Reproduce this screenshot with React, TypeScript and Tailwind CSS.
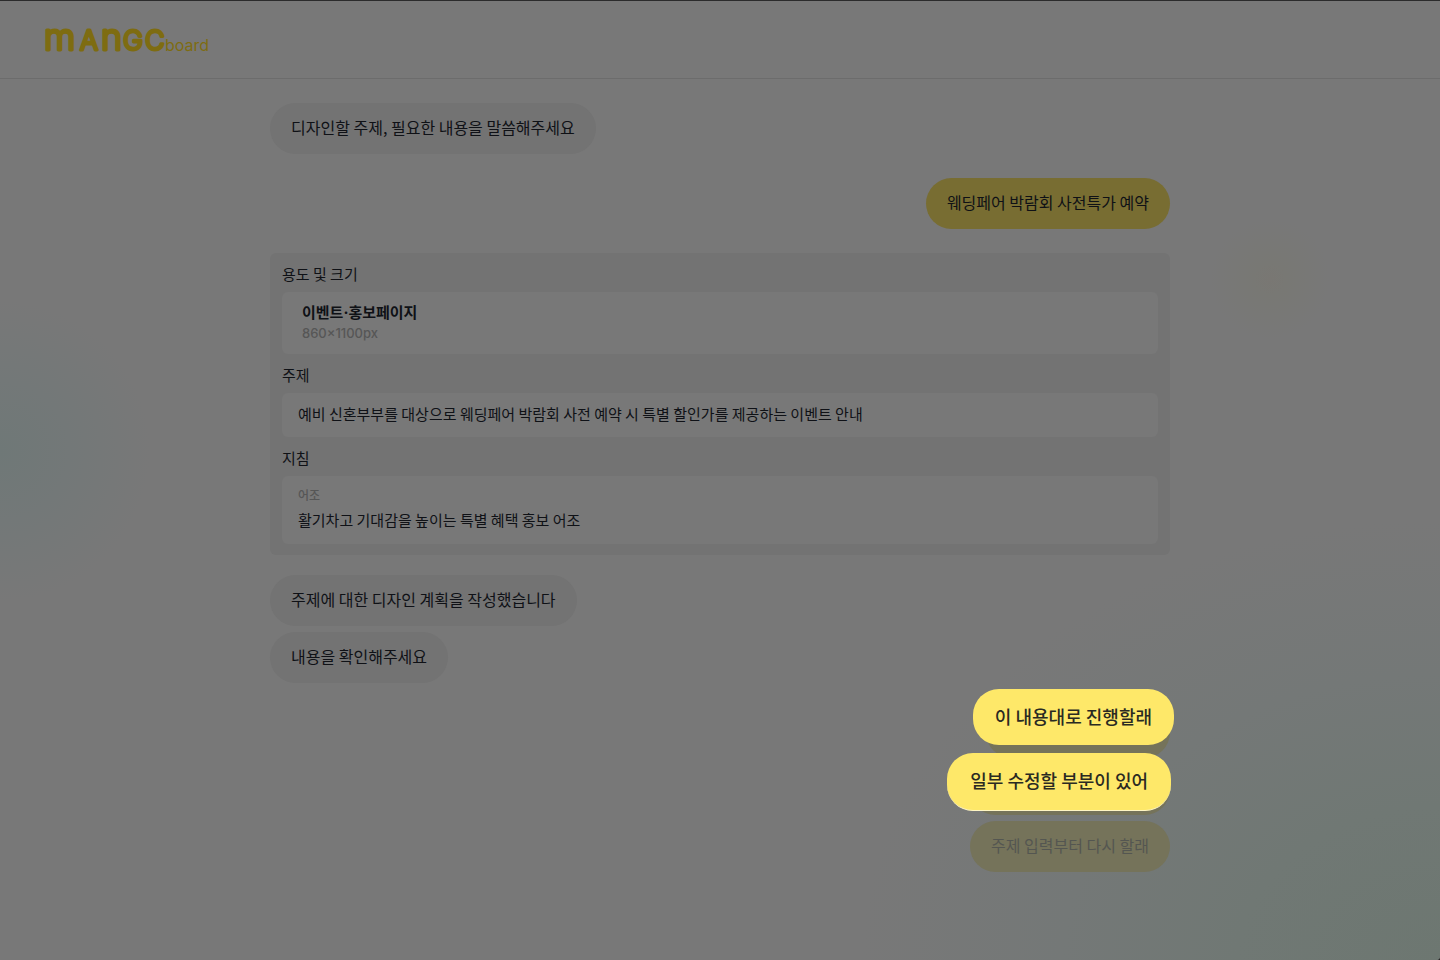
import type { ReactNode } from "react";

function Logo() {
  return (
    <a href="/" aria-label="mango board" className="block">
      <svg width="174" height="60" viewBox="0 0 174 60" fill="#7e6c11">
        <g
          fontFamily="Inter, sans-serif"
          fontWeight="300"
          stroke="#7e6c11"
          strokeWidth="3"
          strokeLinejoin="round"
          strokeLinecap="round"
        >
          <text x="3" y="40" fontSize="36">m</text>
          <text x="39" y="40" fontSize="27">A</text>
          <text x="60" y="40" fontSize="36">n</text>
          <text x="82" y="40" fontSize="27">G</text>
          <text x="104" y="40" fontSize="27">C</text>
        </g>
        <text x="124" y="41" fontFamily="Inter, sans-serif" fontSize="16" fontWeight="400">
          board
        </text>
      </svg>
    </a>
  );
}

function Bubble({ children, mine }: { children: ReactNode; mine?: boolean }) {
  return (
    <p
      className={`px-[21px] pt-3 pb-[14px] text-base leading-[25px] rounded-[26px] ${
        mine ? "self-end bg-[#786d32]" : "self-start bg-[#737373]"
      }`}
    >
      {children}
    </p>
  );
}

function Section({ title, children }: { title: string; children: ReactNode }) {
  return (
    <section>
      <h2 className="pt-[10px] pb-2 leading-[21px]">{title}</h2>
      <div className="rounded-md bg-[#787878]">{children}</div>
    </section>
  );
}

export default function App() {
  return (
    <div className="min-h-screen bg-[#262627] flex font-['Noto_Sans_CJK_KR',sans-serif] text-[#0f1116]">
      <div className="flex-1 flex flex-col border-t border-[#2b2b2c] rounded-br-sm bg-[#787878] bg-[radial-gradient(circle_at_0px_450px,#6f7877_0px,#737878_70px,#78787800_150px),radial-gradient(circle_at_1270px_278px,#797773_0px,#787874_16px,#78787800_60px),radial-gradient(ellipse_580px_440px_at_100%_100%,#6d7771_0%,#707874_35%,#747877_65%,#78787800_100%)]">

        {/* Header */}
        <header className="h-[78px] flex items-center px-[41px] border-b border-[#6c6c6c]">
          <Logo />
        </header>

        {/* Conversation */}
        <main className="w-full max-w-[900px] mx-auto pt-6 pb-20 flex flex-col">
          <Bubble>디자인할 주제, 필요한 내용을 말씀해주세요</Bubble>

          <div className="py-6 flex flex-col">
            <Bubble mine>웨딩페어 박람회 사전특가 예약</Bubble>
          </div>

          {/* Design plan */}
          <div className="px-3 pb-[11px] rounded-md bg-[#737373] text-[15px]">
            <Section title="용도 및 크기">
              <div className="px-5 py-[11px] leading-5 font-[Inter,'Noto_Sans_CJK_KR',sans-serif]">
                <p className="font-bold">이벤트·홍보페이지</p>
                <p className="text-[13px] leading-5 font-medium text-[#565656]">860×1100px</p>
              </div>
            </Section>
            <Section title="주제">
              <p className="px-4 pt-[10px] pb-3 leading-[22px]">
                예비 신혼부부를 대상으로 웨딩페어 박람회 사전 예약 시 특별 할인가를 제공하는 이벤트 안내
              </p>
            </Section>
            <Section title="지침">
              <div className="px-4 pt-[9px] pb-[13px]">
                <h3 className="mb-1 text-xs leading-5 font-medium text-[#565656]">어조</h3>
                <p className="leading-[22px]">활기차고 기대감을 높이는 특별 혜택 홍보 어조</p>
              </div>
            </Section>
          </div>

          <div className="pt-5 pb-6 flex flex-col gap-[6px]">
            <Bubble>주제에 대한 디자인 계획을 작성했습니다</Bubble>
            <Bubble>내용을 확인해주세요</Bubble>
          </div>

          {/* Choices, the first two are lifted above the dimmed page */}
          <ul className="flex flex-col items-end gap-[6px]">
            <li className="relative w-[184px] h-[51px] rounded-[26px] bg-[#75735a]">
              <button
                type="button"
                className="absolute -right-1 bottom-[13px] px-[22px] pt-[13px] pb-[15px] rounded-[26px] bg-[#fee869] text-lg leading-7 font-medium text-[#2a2a22] whitespace-nowrap"
              >
                이 내용대로 진행할래
              </button>
            </li>
            <li className="relative w-[200px] h-[51px] rounded-[26px] bg-[#75735a]">
              <button
                type="button"
                className="absolute -right-px bottom-1 px-[23px] pt-[13px] pb-4 rounded-[26px] border-b border-[#fff6c4] bg-[#fee869] text-lg leading-7 font-medium text-[#2a2a22] whitespace-nowrap"
              >
                일부 수정할 부분이 있어
              </button>
            </li>
            <li>
              <button
                type="button"
                className="block px-[21px] pt-3 pb-[14px] rounded-[26px] bg-[#75735a] text-base leading-[25px] text-[#545651]"
              >
                주제 입력부터 다시 할래
              </button>
            </li>
          </ul>
        </main>
      </div>
    </div>
  );
}
